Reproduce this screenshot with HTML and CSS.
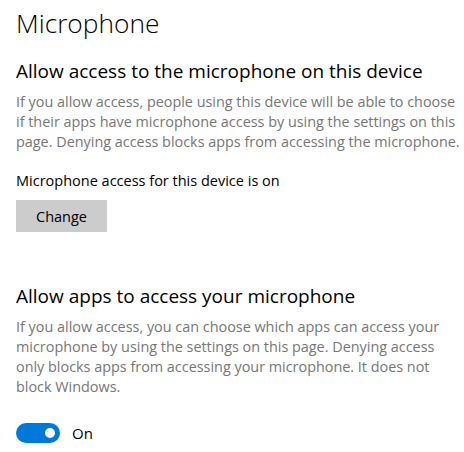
FILE: index.html
```html
<!DOCTYPE html>
<html lang="en">
<head>
<meta charset="UTF-8">
<meta name="viewport" content="width=device-width, initial-scale=1.0">
<title>Microphone</title>
<link rel="stylesheet" href="styles.css">
</head>
<body>

<h1>Microphone</h1>

<div class="secao">
    <h2>Allow access to the microphone on this device</h2>
    <p class="desc linhas">If you allow access, people using this device will be able to choose<br>
    if their apps have microphone access by using the settings on this<br>
    page. Denying access blocks apps from accessing the microphone.</p>
    <p class="estado">Microphone access for this device is on</p>
    <button>Change</button>
</div>

<div class="secao">
    <h2>Allow apps to access your microphone</h2>
    <p class="desc">If you allow access, you can choose which apps can access your microphone by using the settings on this page. Denying access only blocks apps from accessing your microphone. It does not block Windows.</p>
    <div class="toggle">
        <span class="chave"><span class="bolinha"></span></span>
        <span>On</span>
    </div>
</div>

</body>
</html>
```

FILE: styles.css
```css
body { font-family: "Open Sans", sans-serif; background: #fff; color: #000; margin: 0; padding: 0 0 0 16px; }
h1 { font-size: 26.3px; font-weight: 300; margin: 5px 0 0; line-height: 36px; }
.secao { margin-top: 16px; }
.secao + .secao { margin-top: 50px; }
h2 { font-size: 19px; font-weight: 400; margin: 0; line-height: 28px; }
.desc { font-size: 14.4px; color: #767676; line-height: 20px; margin: 7px 0 0; max-width: 444px; }
.desc.linhas { max-width: none; white-space: nowrap; }
.estado { font-size: 14.5px; line-height: 20px; margin: 19px 0 0; }
button { font-family: inherit; font-size: 14.5px; background: #cccccc; border: none; width: 91px; height: 32px; margin-top: 9px; padding: 0; color: #000; display: block; }
.toggle { display: flex; align-items: center; gap: 12px; margin-top: 26px; font-size: 15px; }
.chave { width: 44px; height: 20px; border-radius: 10px; background: #0078d7; position: relative; display: inline-block; }
.bolinha { position: absolute; right: 5px; top: 5px; width: 10px; height: 10px; border-radius: 50%; background: #fff; }
```
